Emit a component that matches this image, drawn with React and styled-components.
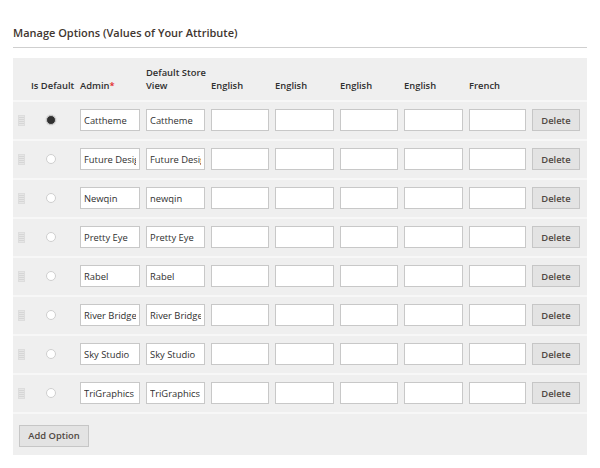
import React from "react";
import styled, { createGlobalStyle } from "styled-components";

const GlobalStyle = createGlobalStyle`
  body {
    margin: 0;
    background: #ffffff;
    font-family: "Open Sans", "Liberation Sans", sans-serif;
    color: #303030;
  }
`;

const options = [
  { admin: "Cattheme", store: "Cattheme", isDefault: true },
  { admin: "Future Design", store: "Future Design" },
  { admin: "Newqin", store: "newqin" },
  { admin: "Pretty Eye", store: "Pretty Eye" },
  { admin: "Rabel", store: "Rabel" },
  { admin: "River Bridge", store: "River Bridge" },
  { admin: "Sky Studio", store: "Sky Studio" },
  { admin: "TriGraphics", store: "TriGraphics" },
];

const COLUMNS = "23px 44px 66px 65px 64px 65px 64px 65px 63px 55px";

const Page = styled.div`
  width: 574px;
  padding: 25px 13px 16px;
`;

const Title = styled.h2`
  margin: 0;
  padding-bottom: 7px;
  font-size: 11px;
  font-weight: 600;
  color: #41362f;
  border-bottom: 1px solid #cfcfcf;
`;

const Table = styled.div`
  margin-top: 10px;
  background: #efefef;
`;

const HeaderRow = styled.div`
  display: grid;
  grid-template-columns: ${COLUMNS};
  align-items: end;
  height: 44px;
  box-sizing: border-box;
  padding-bottom: 8px;
  border-bottom: 2px solid #f7f7f7;
`;

const HeadCell = styled.div`
  font-size: 9.4px;
  font-weight: 600;
  line-height: 13px;
  color: #303030;
  white-space: nowrap;
  margin-left: ${(p) => p.$shift || 0}px;
`;

const Required = styled.span`
  color: #e22626;
`;

const Row = styled.div`
  display: grid;
  grid-template-columns: ${COLUMNS};
  align-items: center;
  height: 39px;
  box-sizing: border-box;
  border-bottom: 2px solid #f7f7f7;
  padding-bottom: 1px;
`;

const Handle = styled.span`
  display: block;
  margin-left: 5px;
  width: 7px;
  height: 11px;
  background:
    repeating-linear-gradient(0deg, #e6e6e6 0 1px, transparent 1px 2px),
    #d6d6d6;
  border: 1px solid #dddddd;
  box-sizing: border-box;
`;

const Radio = styled.span`
  display: block;
  margin-left: 10px;
  width: 10px;
  height: 10px;
  border-radius: 50%;
  box-sizing: border-box;
  background: ${(p) => (p.$checked ? "#303030" : "#ffffff")};
  border: 1px solid ${(p) => (p.$checked ? "#c8c8c8" : "#cfcfcf")};
  box-shadow: ${(p) => (p.$checked ? "0 0 0 1px #e4e4e4" : "none")};
`;

const Field = styled.input`
  width: calc(100% - 6px);
  height: 22px;
  box-sizing: border-box;
  border: 1px solid #c8c8c8;
  background: #ffffff;
  padding: 0 3px;
  font-family: "Open Sans", "Liberation Sans", sans-serif;
  font-size: 9.4px;
  color: #303030;
  outline: none;
`;

const Button = styled.button`
  height: 22px;
  box-sizing: border-box;
  padding: 0 ${(p) => p.$pad || 8}px;
  width: ${(p) => (p.$width ? `${p.$width}px` : "auto")};
  border: 1px solid #c6c6c6;
  background: #e3e3e3;
  font-family: "Open Sans", "Liberation Sans", sans-serif;
  font-size: 9.4px;
  font-weight: 600;
  color: #514943;
  cursor: pointer;
`;

const Footer = styled.div`
  padding: 8px 6px 8px;
`;

const headers = ["English", "English", "English", "English", "French"];

export default function App() {
  return (
    <>
      <GlobalStyle />
      <Page>
        <Title>Manage Options (Values of Your Attribute)</Title>
        <Table>
          <HeaderRow>
            <span />
            <HeadCell $shift={-5}>Is Default</HeadCell>
            <HeadCell>
              Admin<Required>*</Required>
            </HeadCell>
            <HeadCell>
              Default Store
              <br />
              View
            </HeadCell>
            {headers.map((h, i) => (
              <HeadCell key={i}>{h}</HeadCell>
            ))}
            <span />
          </HeaderRow>
          {options.map((o) => (
            <Row key={o.admin}>
              <Handle />
              <Radio $checked={o.isDefault} />
              <Field defaultValue={o.admin} />
              <Field defaultValue={o.store} />
              <Field defaultValue="" />
              <Field defaultValue="" />
              <Field defaultValue="" />
              <Field defaultValue="" />
              <Field defaultValue="" />
              <Button $width={48} $pad={0}>
                Delete
              </Button>
            </Row>
          ))}
          <Footer>
            <Button $width={70}>Add Option</Button>
          </Footer>
        </Table>
      </Page>
    </>
  );
}
